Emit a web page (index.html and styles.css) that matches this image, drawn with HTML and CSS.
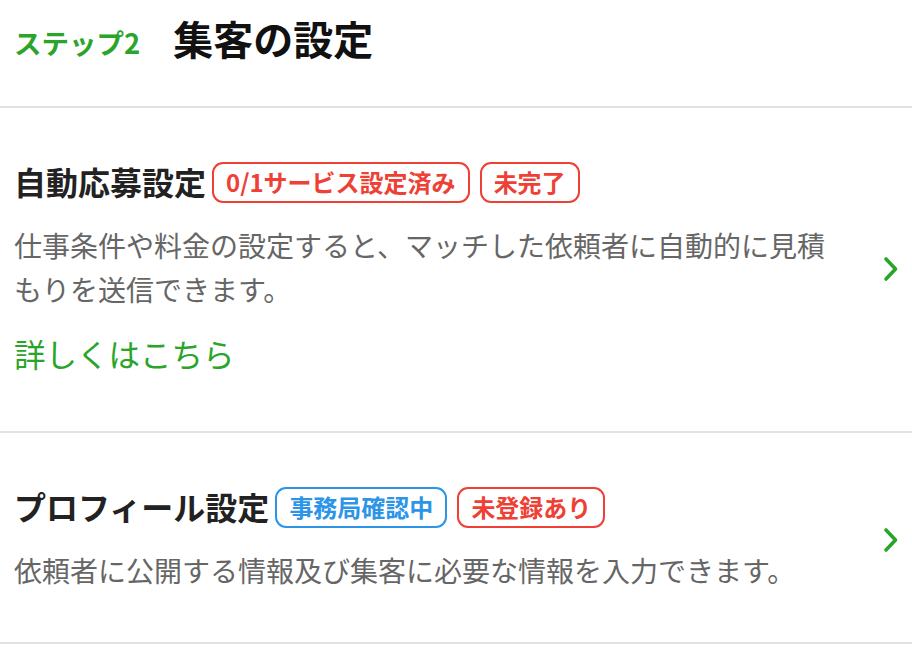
FILE: index.html
```html
<!DOCTYPE html>
<html lang="ja">
<head>
<meta charset="utf-8">
<link rel="stylesheet" href="styles.css">
</head>
<body>
<header class="head">
  <span class="step">ステップ2</span>
  <h1 class="page-title">集客の設定</h1>
</header>
<section class="item">
  <div class="item-body">
    <div class="title-row">
      <h2 class="item-title">自動応募設定</h2>
      <span class="badge red">0/1サービス設定済み</span>
      <span class="badge red">未完了</span>
    </div>
    <p class="desc">仕事条件や料金の設定すると、マッチした依頼者に自動的に見積もりを送信できます。</p>
    <a class="more">詳しくはこちら</a>
  </div>
  <svg class="chev" width="16" height="26" viewBox="0 0 16 26"><path d="M4 3 L13.5 13 L4 23" fill="none" stroke="#2aa52a" stroke-width="3.6" stroke-linecap="round" stroke-linejoin="round"/></svg>
</section>
<section class="item item2">
  <div class="item-body">
    <div class="title-row">
      <h2 class="item-title">プロフィール設定</h2>
      <span class="badge blue">事務局確認中</span>
      <span class="badge red">未登録あり</span>
    </div>
    <p class="desc">依頼者に公開する情報及び集客に必要な情報を入力できます。</p>
  </div>
  <svg class="chev" width="16" height="26" viewBox="0 0 16 26"><path d="M4 3 L13.5 13 L4 23" fill="none" stroke="#2aa52a" stroke-width="3.6" stroke-linecap="round" stroke-linejoin="round"/></svg>
</section>
</body>
</html>
```
FILE: styles.css
```css
* { box-sizing: border-box; }
body {
  margin: 0;
  font-family: "Noto Sans CJK JP", "Noto Sans", sans-serif;
  background: #fff;
  color: #222;
}
.head {
  display: flex;
  align-items: center;
  height: 108px;
  padding: 0 14px 30px;
  border-bottom: 2px solid #e2e2e2;
  gap: 33px;
}
.step {
  color: #2aa52a;
  font-weight: 700;
  font-size: 27.5px;
  padding-top: 8px;
}
.page-title {
  margin: 0;
  font-size: 40px;
  font-weight: 700;
  color: #111;
}
.item {
  display: flex;
  align-items: center;
  padding: 54px 14px 56px;
  border-bottom: 2px solid #e2e2e2;
}
.item2 { padding-bottom: 50px; }
.item-body { flex: 1; }
.title-row {
  display: flex;
  align-items: center;
  height: 41px;
}
.item-title {
  margin: 0 6px 0 0;
  font-size: 32px;
  font-weight: 700;
  color: #222;
  position: relative;
  top: -2px;
}
.badge {
  display: inline-block;
  height: 41px;
  line-height: 35px;
  padding: 0 12px;
  border: 2px solid;
  border-radius: 11px;
  font-size: 24px;
  font-weight: 700;
  margin-right: 10px;
}
.red { color: #ee4035; border-color: #ee4035; }
.blue { color: #2c95e8; border-color: #2c95e8; }
.desc {
  margin: 20px 0 0;
  font-size: 28px;
  line-height: 44px;
  color: #666;
  max-width: 830px;
}
.more {
  display: block;
  margin-top: 20px;
  font-size: 31.5px;
  line-height: 44px;
  color: #2aa52a;
}
.chev { flex: none; }
```
